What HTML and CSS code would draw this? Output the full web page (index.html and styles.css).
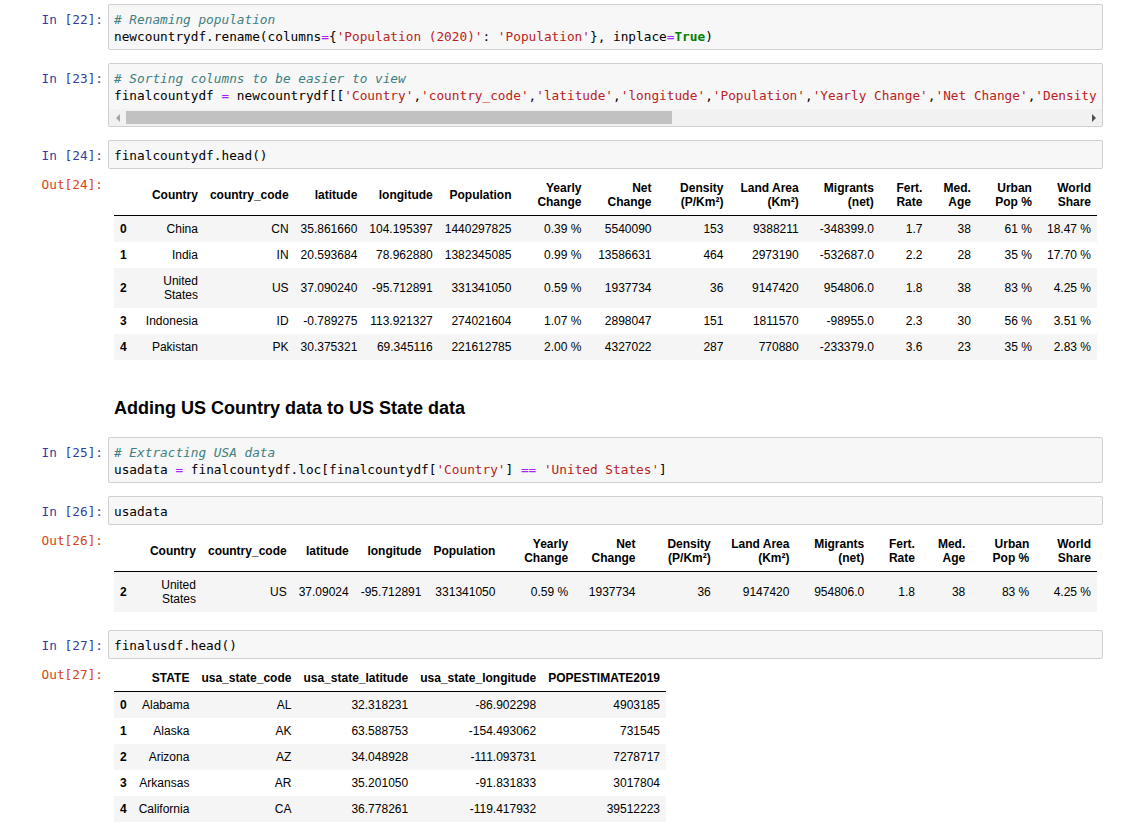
FILE: index.html
```html
<!DOCTYPE html>
<html>
<head>
<meta charset="utf-8">
<title>Notebook</title>
<link rel="stylesheet" href="styles.css">
</head>
<body>
<div class="notebook">

  <div class="cell">
    <div class="row">
      <div class="prompt in-prompt">In [22]:</div>
      <div class="input-area">
        <div class="code"><span class="c"># Renaming population</span>
newcountrydf.rename(columns<span class="o">=</span>{<span class="s">'Population (2020)'</span>: <span class="s">'Population'</span>}, inplace<span class="o">=</span><span class="k">True</span>)</div>
      </div>
    </div>
  </div>

  <div class="cell">
    <div class="row">
      <div class="prompt in-prompt">In [23]:</div>
      <div class="input-area">
        <div class="code scrolling"><span class="c"># Sorting columns to be easier to view</span>
finalcountydf <span class="o">=</span> newcountrydf[[<span class="s">'Country'</span>,<span class="s">'country_code'</span>,<span class="s">'latitude'</span>,<span class="s">'longitude'</span>,<span class="s">'Population'</span>,<span class="s">'Yearly Change'</span>,<span class="s">'Net Change'</span>,<span class="s">'Density</span></div>
        <div class="hscroll">
          <div class="sb-btn"><span class="arrow-left"></span></div>
          <div class="thumb"></div>
          <div class="sb-track"></div>
          <div class="sb-btn"><span class="arrow-right"></span></div>
        </div>
      </div>
    </div>
  </div>

  <div class="cell">
    <div class="row">
      <div class="prompt in-prompt">In [24]:</div>
      <div class="input-area">
        <div class="code">finalcountydf.head()</div>
      </div>
    </div>
    <div class="row output">
      <div class="prompt out-prompt">Out[24]:</div>
      <div class="out-content">
        <table class="df">
          <thead>
            <tr><th></th><th>Country</th><th>country_code</th><th>latitude</th><th>longitude</th><th>Population</th><th>Yearly Change</th><th>Net Change</th><th>Density (P/Km²)</th><th>Land Area (Km²)</th><th>Migrants (net)</th><th>Fert. Rate</th><th>Med. Age</th><th>Urban Pop %</th><th>World Share</th></tr>
          </thead>
          <tbody>
            <tr><th>0</th><td>China</td><td>CN</td><td>35.861660</td><td>104.195397</td><td>1440297825</td><td>0.39 %</td><td>5540090</td><td>153</td><td>9388211</td><td>-348399.0</td><td>1.7</td><td>38</td><td>61 %</td><td>18.47 %</td></tr>
            <tr><th>1</th><td>India</td><td>IN</td><td>20.593684</td><td>78.962880</td><td>1382345085</td><td>0.99 %</td><td>13586631</td><td>464</td><td>2973190</td><td>-532687.0</td><td>2.2</td><td>28</td><td>35 %</td><td>17.70 %</td></tr>
            <tr><th>2</th><td>United States</td><td>US</td><td>37.090240</td><td>-95.712891</td><td>331341050</td><td>0.59 %</td><td>1937734</td><td>36</td><td>9147420</td><td>954806.0</td><td>1.8</td><td>38</td><td>83 %</td><td>4.25 %</td></tr>
            <tr><th>3</th><td>Indonesia</td><td>ID</td><td>-0.789275</td><td>113.921327</td><td>274021604</td><td>1.07 %</td><td>2898047</td><td>151</td><td>1811570</td><td>-98955.0</td><td>2.3</td><td>30</td><td>56 %</td><td>3.51 %</td></tr>
            <tr><th>4</th><td>Pakistan</td><td>PK</td><td>30.375321</td><td>69.345116</td><td>221612785</td><td>2.00 %</td><td>4327022</td><td>287</td><td>770880</td><td>-233379.0</td><td>3.6</td><td>23</td><td>35 %</td><td>2.83 %</td></tr>
          </tbody>
        </table>
      </div>
    </div>
  </div>

  <div class="cell">
    <div class="row">
      <div class="prompt"></div>
      <div class="md-content">
        <h3>Adding US Country data to US State data</h3>
      </div>
    </div>
  </div>

  <div class="cell">
    <div class="row">
      <div class="prompt in-prompt">In [25]:</div>
      <div class="input-area">
        <div class="code"><span class="c"># Extracting USA data</span>
usadata <span class="o">=</span> finalcountydf.loc[finalcountydf[<span class="s">'Country'</span>] <span class="o">==</span> <span class="s">'United States'</span>]</div>
      </div>
    </div>
  </div>

  <div class="cell">
    <div class="row">
      <div class="prompt in-prompt">In [26]:</div>
      <div class="input-area">
        <div class="code">usadata</div>
      </div>
    </div>
    <div class="row output">
      <div class="prompt out-prompt">Out[26]:</div>
      <div class="out-content">
        <table class="df">
          <thead>
            <tr><th></th><th>Country</th><th>country_code</th><th>latitude</th><th>longitude</th><th>Population</th><th>Yearly Change</th><th>Net Change</th><th>Density (P/Km²)</th><th>Land Area (Km²)</th><th>Migrants (net)</th><th>Fert. Rate</th><th>Med. Age</th><th>Urban Pop %</th><th>World Share</th></tr>
          </thead>
          <tbody>
            <tr><th>2</th><td>United States</td><td>US</td><td>37.09024</td><td>-95.712891</td><td>331341050</td><td>0.59 %</td><td>1937734</td><td>36</td><td>9147420</td><td>954806.0</td><td>1.8</td><td>38</td><td>83 %</td><td>4.25 %</td></tr>
          </tbody>
        </table>
      </div>
    </div>
  </div>

  <div class="cell">
    <div class="row">
      <div class="prompt in-prompt">In [27]:</div>
      <div class="input-area">
        <div class="code">finalusdf.head()</div>
      </div>
    </div>
    <div class="row output">
      <div class="prompt out-prompt">Out[27]:</div>
      <div class="out-content">
        <table class="df">
          <thead>
            <tr><th></th><th>STATE</th><th>usa_state_code</th><th>usa_state_latitude</th><th>usa_state_longitude</th><th>POPESTIMATE2019</th></tr>
          </thead>
          <tbody>
            <tr><th>0</th><td>Alabama</td><td>AL</td><td>32.318231</td><td>-86.902298</td><td>4903185</td></tr>
            <tr><th>1</th><td>Alaska</td><td>AK</td><td>63.588753</td><td>-154.493062</td><td>731545</td></tr>
            <tr><th>2</th><td>Arizona</td><td>AZ</td><td>34.048928</td><td>-111.093731</td><td>7278717</td></tr>
            <tr><th>3</th><td>Arkansas</td><td>AR</td><td>35.201050</td><td>-91.831833</td><td>3017804</td></tr>
            <tr><th>4</th><td>California</td><td>CA</td><td>36.778261</td><td>-119.417932</td><td>39512223</td></tr>
          </tbody>
        </table>
      </div>
    </div>
  </div>

</div>
</body>
</html>
```

FILE: styles.css
```css
* {
  box-sizing: border-box;
}

html, body {
  background: #ffffff;
}

body {
  margin: 0;
  padding: 4px 21px 0 0;
  font-family: "Liberation Sans", Arial, sans-serif;
  color: #000000;
}

.cell {
  margin-bottom: 13px;
}

.row {
  display: flex;
  align-items: flex-start;
}

.prompt {
  flex: 0 0 108px;
  padding-right: 5px;
  text-align: right;
  font-family: "DejaVu Sans Mono", "Liberation Mono", monospace;
  font-size: 12.75px;
  line-height: 17px;
  white-space: pre;
}

.in-prompt {
  color: #303f9f;
  padding-top: 7px;
}

.out-prompt {
  color: #d84315;
  padding-top: 1px;
}

.input-area {
  flex: 1;
  min-width: 0;
  border: 1px solid #cfcfcf;
  border-radius: 2px;
  background: #f7f7f7;
  overflow: hidden;
}

.code {
  padding: 6px 5px 4px;
  font-family: "DejaVu Sans Mono", "Liberation Mono", monospace;
  font-size: 12.75px;
  line-height: 17px;
  white-space: pre;
  overflow: hidden;
  color: #000000;
}

.code.scrolling {
  padding-bottom: 5px;
}

.c {
  color: #408080;
  font-style: italic;
}

.s {
  color: #ba2121;
}

.o {
  color: #aa22ff;
}

.k {
  color: #008000;
  font-weight: bold;
}

.hscroll {
  display: flex;
  height: 17px;
  background: #f1f1f1;
}

.sb-btn {
  flex: 0 0 17px;
  display: flex;
  align-items: center;
  justify-content: center;
}

.arrow-left {
  width: 0;
  height: 0;
  border-top: 4px solid transparent;
  border-bottom: 4px solid transparent;
  border-right: 4px solid #a3a3a3;
}

.arrow-right {
  width: 0;
  height: 0;
  border-top: 4px solid transparent;
  border-bottom: 4px solid transparent;
  border-left: 4px solid #505050;
}

.thumb {
  flex: 0 0 546px;
  margin: 2px 0;
  background: #c1c1c1;
}

.sb-track {
  flex: 1;
}

.output {
  margin-top: 6px;
  padding-bottom: 5px;
}

.out-content {
  flex: 1;
  min-width: 0;
  padding: 0 6px;
}

.md-content {
  flex: 1;
  min-width: 0;
  padding: 0 6px;
}

.md-content h3 {
  margin: 20px 0 6px;
  font-size: 18px;
  line-height: 20px;
  font-weight: bold;
}

table.df {
  border-collapse: collapse;
  border-spacing: 0;
  border: none;
  font-size: 12px;
  color: #000000;
}

.df thead {
  border-bottom: 1px solid #000000;
}

.df th,
.df td {
  padding: 6px;
  text-align: right;
  vertical-align: middle;
  line-height: normal;
  white-space: normal;
  border: none;
}

.df td {
  font-weight: normal;
}

.df th {
  font-weight: bold;
}

.df tbody tr:nth-child(odd) {
  background: #f5f5f5;
}
```
